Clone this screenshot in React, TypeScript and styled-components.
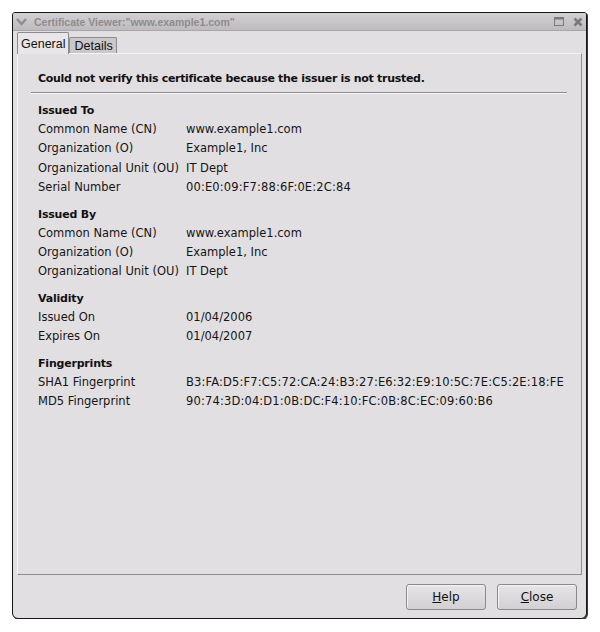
import React from "react";
import styled, { createGlobalStyle } from "styled-components";

const Global = createGlobalStyle`
  html, body { margin: 0; padding: 0; background: #ffffff; }
  body { font-family: "DejaVu Sans", "Liberation Sans", sans-serif; }
`;

const Page = styled.div`
  padding: 12px 0 0 12px;
`;

const Window = styled.div`
  width: 573px;
  height: 605px;
  border: 1px solid #161616;
  border-radius: 3px 3px 6px 6px;
  box-shadow: 1px 1px 0 #3a3a3a;
  background: #e2dfe2;
  display: flex;
  flex-direction: column;
  overflow: hidden;
`;

const TitleBar = styled.div`
  height: 17px;
  display: flex;
  align-items: center;
  padding: 0 3px 0 3px;
  background: linear-gradient(#d2d0d2, #bdbbbd);
  border-bottom: 1px solid #a8a6a8;
  color: #8e8c8e;
  font-family: "Liberation Sans", "DejaVu Sans", sans-serif;
  font-size: 10.5px;
  font-weight: bold;
  gap: 7px;
`;

const TitleText = styled.span`
  flex: 1;
  white-space: nowrap;
`;

const TitleButtons = styled.div`
  display: flex;
  gap: 9px;
  align-items: center;
`;

const Body = styled.div`
  flex: 1;
  display: flex;
  flex-direction: column;
  padding: 1px 4px 8px 4px;
`;

const Tabs = styled.div`
  display: flex;
  align-items: flex-end;
  height: 21px;
`;

const Tab = styled.div<{ $active?: boolean }>`
  height: ${(p) => (p.$active ? "21px" : "15px")};
  padding: ${(p) => (p.$active ? "0 3px" : "0 3px 0 4px")};
  display: flex;
  align-items: center;
  font-family: "Liberation Sans", "DejaVu Sans", sans-serif;
  font-size: 12.5px;
  color: #111;
  background: ${(p) => (p.$active ? "#e8e6e8" : "#cac7ca")};
  border: 1px solid #8c8a8c;
  border-bottom: none;
  border-radius: 2px 2px 0 0;
  position: relative;
  z-index: ${(p) => (p.$active ? 1 : 0)};
  margin-bottom: ${(p) => (p.$active ? "-1px" : "0")};
`;

const Panel = styled.div`
  height: 522px;
  border: 1px solid #f6f5f6;
  border-right-color: #8e8c8e;
  border-bottom-color: #8e8c8e;
  background: #e2dfe2;
  padding: 18px 14px 0 13px;
  box-sizing: border-box;
`;

const Warning = styled.div`
  font-size: 11px;
  letter-spacing: -0.3px;
  font-weight: bold;
  color: #111;
  padding: 0 0 7px 7px;
  border-bottom: 1px solid #8e8c8e;
  box-shadow: 0 1px 0 #f6f5f6;
  margin-bottom: 8px;
`;

const Section = styled.div`
  padding-left: 7px;
  margin-bottom: 7px;
`;

const SectionTitle = styled.div`
  font-size: 11px;
  letter-spacing: -0.2px;
  font-weight: bold;
  color: #111;
  height: 19px;
  line-height: 19px;
`;

const Row = styled.div`
  display: grid;
  grid-template-columns: 148px 1fr;
  height: 19.4px;
  line-height: 19.4px;
  font-size: 11.5px;
  color: #151515;
  white-space: nowrap;
`;

const Value = styled.span<{ $wide?: boolean }>`
  letter-spacing: ${(p) => (p.$wide ? "0.15px" : "0")};
`;

const Footer = styled.div`
  display: flex;
  justify-content: flex-end;
  gap: 11px;
  padding: 9px 5px 0 0;
`;

const Button = styled.button`
  width: 80px;
  height: 26px;
  border: 1px solid #8a888a;
  border-radius: 3px;
  background: linear-gradient(#e6e4e6, #d2d0d2);
  box-shadow: inset 1px 1px 0 #f4f3f4;
  font-family: "DejaVu Sans", "Liberation Sans", sans-serif;
  font-size: 12px;
  color: #111;
  padding: 0;
`;

const U = styled.span`
  text-decoration: underline;
`;

const ChevronIcon = () => (
  <svg width="11" height="9" viewBox="0 0 11 9">
    <path d="M1 2 L5.5 7 L10 2" fill="none" stroke="#8e8c8e" strokeWidth="2.4" />
  </svg>
);

const MaxIcon = () => (
  <svg width="10" height="9" viewBox="0 0 10 9">
    <rect x="0.5" y="0.5" width="9" height="8" fill="none" stroke="#7a787a" />
    <rect x="0.5" y="0.5" width="9" height="2" fill="#7a787a" />
  </svg>
);

const CloseIcon = () => (
  <svg width="10" height="10" viewBox="0 0 10 10">
    <path d="M1.5 1.5 L8.5 8.5 M8.5 1.5 L1.5 8.5" stroke="#7a787a" strokeWidth="2.6" />
  </svg>
);

type Field = [string, string];
const sections: { title: string; rows: Field[] }[] = [
  {
    title: "Issued To",
    rows: [
      ["Common Name (CN)", "www.example1.com"],
      ["Organization (O)", "Example1, Inc"],
      ["Organizational Unit (OU)", "IT Dept"],
      ["Serial Number", "00:E0:09:F7:88:6F:0E:2C:84"],
    ],
  },
  {
    title: "Issued By",
    rows: [
      ["Common Name (CN)", "www.example1.com"],
      ["Organization (O)", "Example1, Inc"],
      ["Organizational Unit (OU)", "IT Dept"],
    ],
  },
  {
    title: "Validity",
    rows: [
      ["Issued On", "01/04/2006"],
      ["Expires On", "01/04/2007"],
    ],
  },
  {
    title: "Fingerprints",
    rows: [
      ["SHA1 Fingerprint", "B3:FA:D5:F7:C5:72:CA:24:B3:27:E6:32:E9:10:5C:7E:C5:2E:18:FE"],
      ["MD5 Fingerprint", "90:74:3D:04:D1:0B:DC:F4:10:FC:0B:8C:EC:09:60:B6"],
    ],
  },
];

export default function App() {
  return (
    <Page>
      <Global />
      <Window>
        <TitleBar>
          <ChevronIcon />
          <TitleText>Certificate Viewer:"www.example1.com"</TitleText>
          <TitleButtons>
            <MaxIcon />
            <CloseIcon />
          </TitleButtons>
        </TitleBar>
        <Body>
          <Tabs>
            <Tab $active>General</Tab>
            <Tab>Details</Tab>
          </Tabs>
          <Panel>
            <Warning>Could not verify this certificate because the issuer is not trusted.</Warning>
            {sections.map((s) => (
              <Section key={s.title}>
                <SectionTitle>{s.title}</SectionTitle>
                {s.rows.map(([k, v], i) => (
                  <Row key={i}>
                    <span>{k}</span>
                    <Value $wide={v.includes(":")}>{v}</Value>
                  </Row>
                ))}
              </Section>
            ))}
          </Panel>
          <Footer>
            <Button>
              <U>H</U>elp
            </Button>
            <Button>
              <U>C</U>lose
            </Button>
          </Footer>
        </Body>
      </Window>
    </Page>
  );
}
